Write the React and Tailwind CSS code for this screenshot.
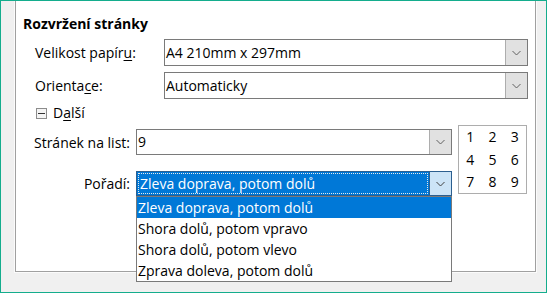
import React from "react";

function Chevron({ color = "#606060" }) {
  return (
    <svg width="9" height="6" viewBox="0 0 9 6" className="block">
      <path d="M0.5 1 L4.5 5 L8.5 1" fill="none" stroke={color} strokeWidth="1" />
    </svg>
  );
}

function Combo({ value, w, h = "h-[27px]" }) {
  return (
    <div className={`flex ${w} ${h} border border-[#7a7a7a] bg-white`}>
      <div className="flex-1 flex items-center pl-[1px] text-black leading-none">{value}</div>
      <div className="w-[22px] h-full bg-[#e1e1e1] border-l border-[#adadad] flex items-center justify-center">
        <Chevron />
      </div>
    </div>
  );
}

export default function App() {
  const items = [
    "Zleva doprava, potom dolů",
    "Shora dolů, potom vpravo",
    "Shora dolů, potom vlevo",
    "Zprava doleva, potom dolů",
  ];
  return (
    <div className="w-[547px] h-[293px] border border-[#14ad8d] bg-[#f0f0f0] overflow-hidden font-['Open_Sans',sans-serif] text-[14px] text-black">
      <div className="ml-[13px] w-[523px] h-[272px] border-x border-b border-[#fbfbfb]">
        <div className="relative w-full h-full border-x border-b border-[#a0a0a0] bg-white">
          <div className="pt-[13px] pl-[7px] h-[33px] font-bold leading-[20px] whitespace-nowrap">Rozvržení stránky</div>
          <div className="mt-[5px] pl-[19px] flex items-center h-[27px]">
            <div className="w-[129px] whitespace-nowrap">
              Velikost papír<span className="underline underline-offset-2">u</span>:
            </div>
            <Combo value="A4 210mm x 297mm" w="w-[364px]" />
          </div>
          <div className="mt-[6px] pl-[19px] flex items-center h-[27px]">
            <div className="w-[129px] whitespace-nowrap">
              Orienta<span className="underline underline-offset-2">c</span>e:
            </div>
            <Combo value="Automaticky" w="w-[364px]" />
          </div>
          <div className="mt-[6px] pl-[20px] flex items-center h-[16px] gap-[6px]">
            <div className="w-[11px] h-[11px] border border-[#8c8c8c] bg-[#f4f4f4] flex items-center justify-center">
              <div className="w-[7px] h-[1px] bg-[#333]" />
            </div>
            <div className="leading-none whitespace-nowrap">
              D<span className="underline underline-offset-2">a</span>lší
            </div>
          </div>
          <div className="mt-[4px] pl-[19px] flex">
            <div className="flex flex-col">
              <div className="mt-[4px] flex items-center h-[26px]">
                <div className="w-[97px] flex justify-end pr-[2px] whitespace-nowrap">Stránek na list:</div>
                <div className="ml-[4px]">
                  <Combo value="9" w="w-[316px]" h="h-[26px]" />
                </div>
              </div>
              <div className="mt-[16px] flex items-center h-[25px]">
                <div className="w-[97px] flex justify-end pr-[2px] whitespace-nowrap">Pořadí:</div>
                <div className="ml-[4px] relative">
                  <div className="flex w-[316px] h-[25px] border border-[#2c5f8f] bg-[#0078d7]">
                    <div className="flex-1 m-[1px] border border-dotted border-[#e8e8e8] flex items-center pl-[1px] text-white leading-none whitespace-nowrap">
                      Zleva doprava, potom dolů
                    </div>
                    <div className="w-[22px] h-full bg-[#cce4f7] border-l border-[#2c5f8f] flex items-center justify-center">
                      <Chevron color="#404040" />
                    </div>
                  </div>
                  <div className="absolute left-0 top-[25px] w-[316px] border border-[#7a7a7a] bg-white z-10">
                    {items.map((t, i) => (
                      <div
                        key={t}
                        className={`h-[21px] flex items-center pl-[1px] leading-none whitespace-nowrap ${
                          i === 0 ? "bg-[#0078d7] text-white" : "text-black"
                        }`}
                      >
                        {t}
                      </div>
                    ))}
                  </div>
                </div>
              </div>
            </div>
            <div className="ml-[6px] w-[69px] h-[69px] border border-[#adadad] bg-white grid grid-cols-3 grid-rows-3 content-center">
              {[1, 2, 3, 4, 5, 6, 7, 8, 9].map((n) => (
                <div key={n} className="h-[22.5px] flex items-center justify-center leading-none">
                  {n}
                </div>
              ))}
            </div>
          </div>
        </div>
      </div>
    </div>
  );
}
